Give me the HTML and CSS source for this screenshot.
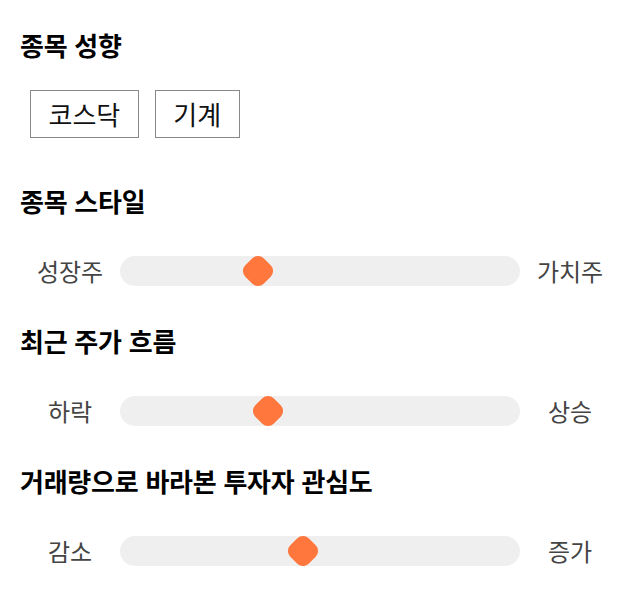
FILE: index.html
```html
<!DOCTYPE html>
<html lang="ko">
<head>
<meta charset="utf-8">
<link rel="stylesheet" href="styles.css">
</head>
<body>
  <section class="block block-tags">
    <h2 class="title">종목 성향</h2>
    <div class="chips">
      <span class="chip">코스닥</span>
      <span class="chip">기계</span>
    </div>
  </section>
  <section class="block">
    <h2 class="title">종목 스타일</h2>
    <div class="slider">
      <span class="label">성장주</span>
      <div class="track"><span class="thumb" style="left: 34.5%"></span></div>
      <span class="label">가치주</span>
    </div>
  </section>
  <section class="block">
    <h2 class="title">최근 주가 흐름</h2>
    <div class="slider">
      <span class="label">하락</span>
      <div class="track"><span class="thumb" style="left: 37%"></span></div>
      <span class="label">상승</span>
    </div>
  </section>
  <section class="block">
    <h2 class="title">거래량으로 바라본 투자자 관심도</h2>
    <div class="slider">
      <span class="label">감소</span>
      <div class="track"><span class="thumb" style="left: 45.75%"></span></div>
      <span class="label">증가</span>
    </div>
  </section>
</body>
</html>
```

FILE: styles.css
```css
html, body {
  margin: 0;
  padding: 0;
  background: #fff;
}
body {
  font-family: "Noto Sans CJK KR", "Noto Sans", sans-serif;
  color: #000;
  padding: 27px 20px 0;
}
.block {
  display: flex;
  flex-direction: column;
}
.title {
  margin: 0;
  font-size: 26px;
  font-weight: 700;
  line-height: 36px;
  letter-spacing: -0.25px;
  color: #000;
}
.chips {
  display: flex;
  gap: 16px;
  margin: 27px 0 0 10px;
}
.chip {
  border: 1px solid #888;
  padding: 5px 17.5px;
  font-size: 26px;
  line-height: 36px;
  color: #111;
}
.slider {
  display: grid;
  grid-template-columns: 100px 1fr 100px;
  align-items: center;
  margin-top: 37px;
}
.label {
  text-align: center;
  font-size: 24px;
  line-height: 30px;
  color: #444;
}
.track {
  position: relative;
  height: 30px;
  border-radius: 15px;
  background: #efefef;
}
.thumb {
  position: absolute;
  top: 50%;
  width: 26px;
  height: 26px;
  border-radius: 8px;
  background: #ff773d;
  transform: translate(-50%, -50%) rotate(45deg);
}
.block + .block {
  margin-top: 37px;
}
.block-tags + .block {
  margin-top: 45px;
}
```
